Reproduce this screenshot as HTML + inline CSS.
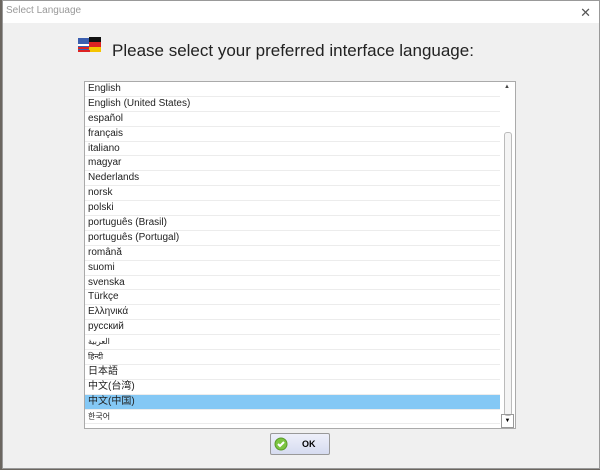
<!DOCTYPE html><html><head><meta charset="utf-8"><style>
body{margin:0;width:600px;height:470px;background:#6b6660;position:relative;overflow:hidden;font-family:"Liberation Sans","Noto Sans CJK SC",sans-serif}
.win{position:absolute;left:2px;top:0;width:596px;height:467px;background:#f0f0f0;border:1px solid #999}
.title{height:22px;background:#fff;font-size:10px;color:#999;line-height:20px;padding-left:3px}
.x{position:absolute;right:8px;top:2px;font-size:13px;color:#555}
.head{position:absolute;left:109px;top:40px;font-size:17px;color:#222}
.list{position:absolute;left:81px;top:80px;width:430px;height:346px;background:#fff;border:1px solid #aaa}
.row{height:14.9px;box-sizing:border-box;border-bottom:1px solid #ececec;font-size:10px;line-height:14px;padding-left:3px;color:#222;width:415px}
.sel{background:#84c8f5}
.sb{position:absolute;right:0;top:0;width:15px;height:346px;background:#fff}
.thumb{position:absolute;left:4px;top:50px;width:6px;height:282px;border:1px solid #bbb;border-radius:3px;background:#f4f4f4}
.ok{position:absolute;left:267px;top:432px;width:58px;height:20px;border:1px solid #999;border-radius:2px;background:linear-gradient(#eef0fa,#d6dcf0);font-size:9px;font-weight:bold;line-height:20px}
</style></head><body><div class="win">
<div class="title">Select Language<span class="x">✕</span></div>
<svg style="position:absolute;left:74px;top:34px" width="26" height="20"><rect x="1" y="3" width="14" height="12" fill="#3b5fb0"/><rect x="1" y="9" width="14" height="2" fill="#fff"/><rect x="1" y="12" width="14" height="2" fill="#d22"/><rect x="12" y="2" width="12" height="5" fill="#111"/><rect x="12" y="7" width="12" height="5" fill="#d22"/><rect x="12" y="12" width="12" height="5" fill="#f5c400"/><rect x="1" y="15" width="12" height="2" fill="#d22"/></svg>
<div class="head">Please select your preferred interface language:</div>
<div class="list">
<div class="row">English</div><div class="row">English (United States)</div><div class="row">español</div><div class="row">français</div><div class="row">italiano</div><div class="row">magyar</div><div class="row">Nederlands</div><div class="row">norsk</div><div class="row">polski</div><div class="row">português (Brasil)</div><div class="row">português (Portugal)</div><div class="row">română</div><div class="row">suomi</div><div class="row">svenska</div><div class="row">Türkçe</div><div class="row">Ελληνικά</div><div class="row">русский</div><div class="row" style="font-size:8px">العربية</div><div class="row" style="font-size:8px">हिन्दी</div><div class="row">日本語</div><div class="row">中文(台湾)</div><div class="row sel">中文(中国)</div><div class="row" style="font-size:8px">한국어</div>
<div class="sb"><div style="position:absolute;left:4px;top:2px;font-size:6px;color:#444">▲</div><div class="thumb"></div><div style="position:absolute;left:1px;bottom:0;width:11px;height:12px;border:1px solid #999;font-size:6px;text-align:center;line-height:12px">▼</div></div>
</div>
<div class="ok"><svg style="position:absolute;left:3px;top:3px" width="14" height="14"><circle cx="7" cy="7" r="6" fill="#7cc542" stroke="#5a9a2a"/><path d="M4 7l2 2 4-4" stroke="#fff" stroke-width="2" fill="none"/></svg><span style="position:absolute;left:31px">OK</span></div>
</div></body></html>
